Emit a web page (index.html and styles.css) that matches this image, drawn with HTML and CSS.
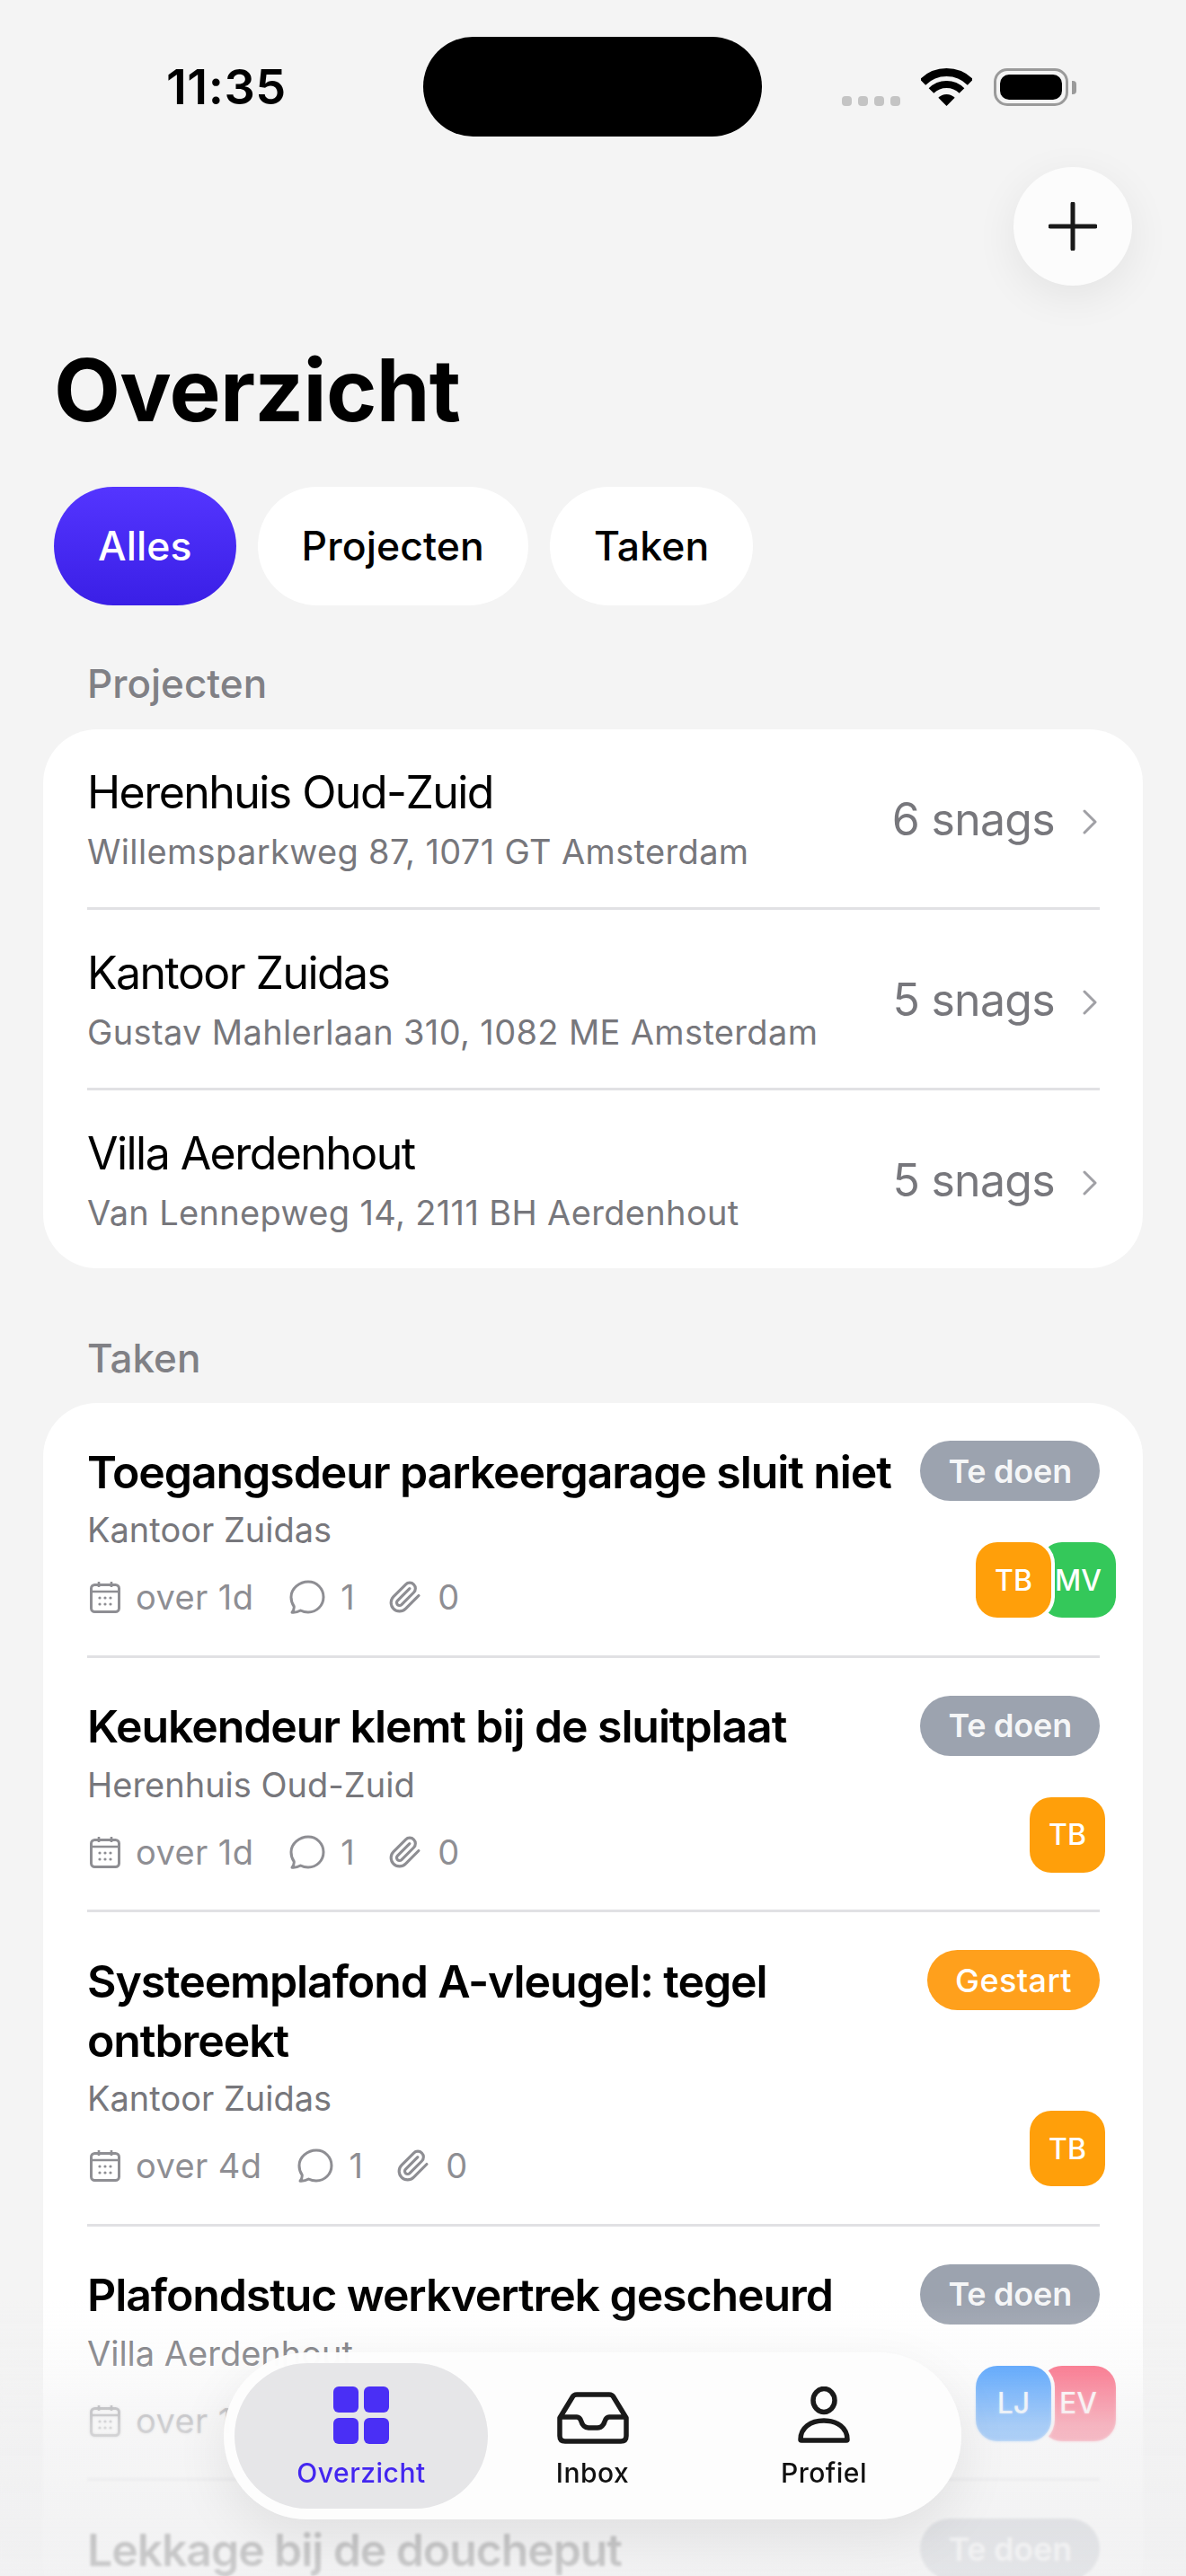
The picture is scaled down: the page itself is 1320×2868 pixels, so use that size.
FILE: index.html
```html
<!DOCTYPE html>
<html lang="en">
<head>
  <meta charset="UTF-8">
  <meta name="viewport" content="width=device-width, initial-scale=1.0">
  <title>Overzicht</title>
  <link rel="stylesheet" href="styles.css">
</head>
<body>
  <svg class="sprite" xmlns="http://www.w3.org/2000/svg">
    <symbol id="i-chevron" viewBox="0 0 16 28">
      <path d="M2 2l12 12L2 26" fill="none" stroke="currentColor" stroke-width="3" stroke-linecap="round" stroke-linejoin="round"/>
    </symbol>
    <symbol id="i-calendar" viewBox="0 0 34 36">
      <rect x="1.5" y="4.5" width="31" height="30" rx="4" fill="none" stroke="currentColor" stroke-width="3"/>
      <path d="M2 12h30M10 1v6M24 1v6" fill="none" stroke="currentColor" stroke-width="2.6"/>
      <g fill="currentColor">
        <circle cx="11" cy="19" r="1.6"/><circle cx="17" cy="19" r="1.6"/><circle cx="23" cy="19" r="1.6"/>
        <circle cx="11" cy="26" r="1.6"/><circle cx="17" cy="26" r="1.6"/><circle cx="23" cy="26" r="1.6"/>
      </g>
    </symbol>
    <symbol id="i-comment" viewBox="0 0 40 38">
      <path d="M21 2c9.500 0 17 7.500 17 17s-7.500 17-17 17c-3 0-6-.7-8.500-2-2.500 1.500-6 2.500-9.500 2.200 1.500-1.800 2.500-4.200 2.200-6.700C3 26.500 2 23 2 19 2 9.500 11.500 2 21 2z" fill="none" stroke="currentColor" stroke-width="3" stroke-linejoin="round"/>
    </symbol>
    <symbol id="i-clip" viewBox="0 0 24 24">
      <path d="M21.44 11.05l-9.190 9.190a6 6 0 0 1-8.490-8.490l8.570-8.570A4 4 0 1 1 18 8.840l-8.590 8.570a2 2 0 0 1-2.830-2.830l8.490-8.480" fill="none" stroke="currentColor" stroke-width="2" stroke-linecap="round" stroke-linejoin="round"/>
    </symbol>
  </svg>

  <div class="screen">
    <!-- Status bar -->
    <div class="status-bar">
      <span class="status-time">11:35</span>
      <div class="island"></div>
      <div class="status-icons">
        <div class="signal-dots"><span></span><span></span><span></span><span></span></div>
        <svg class="icon-wifi" viewBox="0 0 57 42">
          <path d="M2 15.500A37.500 37.500 0 0 1 55 15.500" fill="none" stroke="#000" stroke-width="9"/>
          <path d="M11.500 25A24 24 0 0 1 45.500 25" fill="none" stroke="#000" stroke-width="8"/>
          <path d="M28.500 42L19.300 32.800A13 13 0 0 1 37.700 32.800Z" fill="#000"/>
        </svg>
        <div class="battery"><div class="battery-fill"></div></div>
        <div class="battery-nub"></div>
      </div>
    </div>

    <div class="actions">
      <button class="add-button">
        <svg class="icon-plus" viewBox="0 0 54 54">
          <path d="M27 2v50M2 27h50" fill="none" stroke="#1a1a1a" stroke-width="5" stroke-linecap="round"/>
        </svg>
      </button>
    </div>

    <h1 class="page-title">Overzicht</h1>

    <div class="chips">
      <a class="chip chip-active">Alles</a>
      <a class="chip">Projecten</a>
      <a class="chip">Taken</a>
    </div>

    <!-- Projects -->
    <h2 class="section-label">Projecten</h2>
    <div class="card">
      <div class="project">
        <div class="project-text">
          <div class="project-name">Herenhuis Oud-Zuid</div>
          <div class="project-address">Willemsparkweg 87, 1071 GT Amsterdam</div>
        </div>
        <span class="project-count">6 snags</span>
        <svg class="icon-chevron"><use href="#i-chevron"/></svg>
      </div>
      <div class="project">
        <div class="project-text">
          <div class="project-name">Kantoor Zuidas</div>
          <div class="project-address">Gustav Mahlerlaan 310, 1082 ME Amsterdam</div>
        </div>
        <span class="project-count">5 snags</span>
        <svg class="icon-chevron"><use href="#i-chevron"/></svg>
      </div>
      <div class="project">
        <div class="project-text">
          <div class="project-name">Villa Aerdenhout</div>
          <div class="project-address">Van Lennepweg 14, 2111 BH Aerdenhout</div>
        </div>
        <span class="project-count">5 snags</span>
        <svg class="icon-chevron"><use href="#i-chevron"/></svg>
      </div>
    </div>

    <!-- Tasks -->
    <h2 class="section-label section-label-tasks">Taken</h2>
    <div class="card">
      <div class="task">
        <div class="task-text">
          <div class="task-title">Toegangsdeur parkeergarage sluit niet</div>
          <div class="task-project">Kantoor Zuidas</div>
          <div class="task-meta">
            <svg class="icon-calendar"><use href="#i-calendar"/></svg><span class="meta-value">over 1d</span>
            <svg class="icon-comment"><use href="#i-comment"/></svg><span class="meta-value">1</span>
            <svg class="icon-clip"><use href="#i-clip"/></svg><span class="meta-value">0</span>
          </div>
        </div>
        <div class="task-side">
          <span class="badge badge-todo">Te doen</span>
          <div class="avatars avatars-pair">
            <span class="avatar avatar-orange">TB</span>
            <span class="avatar avatar-green">MV</span>
          </div>
        </div>
      </div>

      <div class="task">
        <div class="task-text">
          <div class="task-title">Keukendeur klemt bij de sluitplaat</div>
          <div class="task-project">Herenhuis Oud-Zuid</div>
          <div class="task-meta">
            <svg class="icon-calendar"><use href="#i-calendar"/></svg><span class="meta-value">over 1d</span>
            <svg class="icon-comment"><use href="#i-comment"/></svg><span class="meta-value">1</span>
            <svg class="icon-clip"><use href="#i-clip"/></svg><span class="meta-value">0</span>
          </div>
        </div>
        <div class="task-side">
          <span class="badge badge-todo">Te doen</span>
          <div class="avatars">
            <span class="avatar avatar-orange">TB</span>
          </div>
        </div>
      </div>

      <div class="task">
        <div class="task-text">
          <div class="task-title">Systeemplafond A-vleugel: tegel ontbreekt</div>
          <div class="task-project">Kantoor Zuidas</div>
          <div class="task-meta">
            <svg class="icon-calendar"><use href="#i-calendar"/></svg><span class="meta-value">over 4d</span>
            <svg class="icon-comment"><use href="#i-comment"/></svg><span class="meta-value">1</span>
            <svg class="icon-clip"><use href="#i-clip"/></svg><span class="meta-value">0</span>
          </div>
        </div>
        <div class="task-side">
          <span class="badge badge-started">Gestart</span>
          <div class="avatars">
            <span class="avatar avatar-orange">TB</span>
          </div>
        </div>
      </div>

      <div class="task">
        <div class="task-text">
          <div class="task-title">Plafondstuc werkvertrek gescheurd</div>
          <div class="task-project">Villa Aerdenhout</div>
          <div class="task-meta">
            <svg class="icon-calendar"><use href="#i-calendar"/></svg><span class="meta-value">over 1d</span>
            <svg class="icon-comment"><use href="#i-comment"/></svg><span class="meta-value">1</span>
            <svg class="icon-clip"><use href="#i-clip"/></svg><span class="meta-value">0</span>
          </div>
        </div>
        <div class="task-side">
          <span class="badge badge-todo">Te doen</span>
          <div class="avatars avatars-pair">
            <span class="avatar avatar-blue">LJ</span>
            <span class="avatar avatar-pink">EV</span>
          </div>
        </div>
      </div>

      <div class="task">
        <div class="task-text">
          <div class="task-title">Lekkage bij de doucheput</div>
        </div>
        <div class="task-side">
          <span class="badge badge-todo">Te doen</span>
        </div>
      </div>
    </div>

    <!-- Bottom fade and floating tab bar -->
    <div class="bottom-blur"></div>
    <div class="bottom-fade"></div>
    <nav class="tab-bar">
      <a class="tab tab-active">
        <div class="icon-grid"><span></span><span></span><span></span><span></span></div>
        <span class="tab-label">Overzicht</span>
      </a>
      <a class="tab">
        <svg class="icon-inbox" viewBox="0 0 80 58">
          <path d="M3 29L17 6c1-2 3-3 5-3h36c2 0 4 1 5 3l14 23v20c0 4-2 6-6 6H9c-4 0-6-2-6-6z" fill="none" stroke="#1a1a1a" stroke-width="5.500" stroke-linejoin="round"/>
          <path d="M3 28h19c3 0 4 2 5 5 1 4 4 7 8 7h10c4 0 7-3 8-7 1-3 2-5 5-5h19" fill="none" stroke="#1a1a1a" stroke-width="5.500" stroke-linejoin="round"/>
        </svg>
        <span class="tab-label">Inbox</span>
      </a>
      <a class="tab">
        <svg class="icon-profile" viewBox="0 0 58 64">
          <ellipse cx="29" cy="15.500" rx="12" ry="13" fill="none" stroke="#1a1a1a" stroke-width="5.500"/>
          <path d="M3 59c0-13 11-21 26-21s26 8 26 21c0 .6-.4 1-1 1H4c-.6 0-1-.4-1-1z" fill="none" stroke="#1a1a1a" stroke-width="5.500" stroke-linejoin="round"/>
        </svg>
        <span class="tab-label">Profiel</span>
      </a>
    </nav>
  </div>
</body>
</html>
```

FILE: styles.css
```css
:root {
  --background: #f4f4f4;
  --card: #ffffff;
  --border: #e1e1e4;
  --foreground: #000000;
  --muted: #77777c;
  --meta: #8e8e93;
  --primary: #4326f0;
  --orange: #ff9f0a;
}

* {
  box-sizing: border-box;
}

body {
  margin: 0;
  background-color: var(--background);
  color: var(--foreground);
  font-family: Inter, "Noto Sans", sans-serif;
}

.sprite {
  display: none;
}

.screen {
  position: relative;
  width: 1320px;
  height: 2868px;
  overflow: hidden;
}

/* Status bar */
.status-bar {
  display: flex;
  align-items: center;
  height: 111px;
  margin-top: 41px;
  padding-left: 185px;
}

.status-time {
  width: 286px;
  font-size: 54px;
  font-weight: 600;
  letter-spacing: 0.500px;
}

.island {
  width: 377px;
  height: 111px;
  border-radius: 56px;
  background-color: #000;
}

.status-icons {
  display: flex;
  align-items: flex-end;
  height: 42px;
  margin-left: 89px;
}

.signal-dots {
  display: flex;
  gap: 7px;
  margin-right: 23px;
}

.signal-dots span {
  width: 11px;
  height: 11px;
  border-radius: 4px;
  background-color: #c4c4c4;
}

.icon-wifi {
  width: 57px;
  height: 42px;
  margin-right: 24px;
}

.battery {
  width: 83px;
  height: 42px;
  padding: 4px;
  border: 3px solid #9a9a9a;
  border-radius: 15px;
}

.battery-fill {
  height: 100%;
  border-radius: 10px;
  background-color: #000;
}

.battery-nub {
  width: 5px;
  height: 15px;
  margin-left: 4px;
  margin-bottom: 13px;
  border-radius: 0 4px 4px 0;
  background-color: #9a9a9a;
}

/* Header */
.actions {
  display: flex;
  justify-content: flex-end;
  margin-top: 34px;
  padding-right: 60px;
}

.add-button {
  display: flex;
  align-items: center;
  justify-content: center;
  width: 132px;
  height: 132px;
  padding: 0;
  border: none;
  border-radius: 50%;
  background-color: #fcfcfc;
  box-shadow: 0 12px 48px rgba(0, 0, 0, 0.07);
}

.icon-plus {
  width: 54px;
  height: 54px;
}

.page-title {
  margin: 58px 0 0 60px;
  font-size: 96px;
  line-height: 116px;
  font-weight: 700;
  letter-spacing: -0.700px;
}

.chips {
  display: flex;
  gap: 24px;
  margin: 50px 0 0 60px;
}

.chip {
  display: flex;
  align-items: center;
  height: 132px;
  padding: 0 49px;
  border-radius: 66px;
  background-color: var(--card);
  font-size: 44.500px;
  font-weight: 500;
  letter-spacing: 0.100px;
}

.chip-active {
  background: linear-gradient(180deg, #5435ff, #3a1fe6);
  color: #fff;
}

.section-label {
  margin: 62px 0 26px 97px;
  color: #808085;
  font-size: 44px;
  line-height: 50px;
  font-weight: 500;
}

.section-label-tasks {
  margin-top: 75px;
  margin-bottom: 25px;
}

.card {
  margin: 0 48px;
  padding: 0 48px 0 49px;
  border-radius: 60px;
  background-color: var(--card);
}

/* Project rows */
.project {
  display: flex;
  align-items: center;
  height: 201px;
  padding-top: 1px;
  border-bottom: 3px solid var(--border);
}

.project:last-child {
  height: 198px;
  padding-top: 2px;
  border-bottom: none;
}

.project-text {
  flex: 1;
}

.project-name {
  font-size: 50px;
  line-height: 62px;
  letter-spacing: -1.550px;
}

.project-address {
  margin-top: 10px;
  color: var(--muted);
  font-size: 38px;
  line-height: 50px;
  letter-spacing: 0.350px;
}

.project-count {
  color: var(--muted);
  font-size: 50px;
  letter-spacing: -0.700px;
}

.icon-chevron {
  width: 16px;
  height: 28px;
  margin-top: 6px;
  margin-left: 31px;
  margin-right: 3px;
  color: #a0a0a5;
}

/* Task rows */
.task {
  display: flex;
  justify-content: space-between;
  padding: 42px 0 39.500px;
  border-bottom: 3px solid var(--border);
}

.task:last-child {
  border-bottom: none;
}

.task-text {
  flex: 1;
}

.task-title {
  max-width: 905px;
  margin-top: 1.500px;
  font-size: 50px;
  line-height: 66px;
  font-weight: 600;
  letter-spacing: -1.100px;
}

.task-project {
  margin-top: 6.500px;
  color: var(--muted);
  font-size: 38px;
  line-height: 50px;
}

.task-meta {
  display: flex;
  align-items: center;
  height: 50px;
  margin-top: 25px;
  color: var(--meta);
  font-size: 38px;
}

.meta-value {
  margin-left: 17px;
  margin-right: 40px;
  letter-spacing: 0.400px;
}

.icon-calendar {
  width: 34px;
  height: 36px;
  margin-left: 3px;
  color: var(--meta);
}

.icon-comment {
  width: 40px;
  height: 38px;
  color: var(--meta);
}

.icon-clip {
  width: 38px;
  height: 38px;
  margin-left: -3px;
  color: var(--meta);
}

.task-side {
  display: flex;
  flex-direction: column;
  align-items: flex-end;
  justify-content: space-between;
  margin-bottom: 2px;
}

.badge {
  display: flex;
  align-items: center;
  height: 67px;
  padding: 0 31px;
  border-radius: 34px;
  color: rgba(255, 255, 255, 0.92);
  font-size: 36px;
  font-weight: 600;
  letter-spacing: -0.200px;
}

.badge-todo {
  background-color: #9ca3af;
}

.badge-started {
  background-color: #ffa01c;
  color: #fff;
  font-weight: 500;
  letter-spacing: 0.400px;
}

.avatars {
  display: flex;
  margin-right: -6px;
}

.avatars-pair {
  margin-right: -18px;
}

.avatar {
  display: flex;
  align-items: center;
  justify-content: center;
  width: 84px;
  height: 84px;
  border-radius: 24px;
  color: #fff;
  font-size: 32px;
  font-weight: 500;
}

.avatars-pair .avatar:first-child {
  position: relative;
  z-index: 1;
  box-shadow: 0 0 0 4px #fff;
}

.avatars-pair .avatar + .avatar {
  margin-left: -12px;
}

.avatar-orange {
  background-color: var(--orange);
}

.avatar-green {
  background-color: #34c85a;
}

.avatar-blue {
  background-color: #3b96ff;
}

.avatar-pink {
  background-color: #fc5c78;
}

/* Bottom fade + tab bar */
.bottom-blur {
  position: absolute;
  z-index: 2;
  left: 0;
  right: 0;
  top: 2640px;
  bottom: 0;
  backdrop-filter: blur(1.500px);
  -webkit-mask-image: linear-gradient(180deg, transparent, #000 120px);
  mask-image: linear-gradient(180deg, transparent, #000 120px);
}

.bottom-fade {
  position: absolute;
  z-index: 2;
  left: 0;
  right: 0;
  top: 2560px;
  bottom: 0;
  background: linear-gradient(180deg, rgba(240, 240, 241, 0) 0, rgba(240, 240, 241, 0.22) 70px, rgba(240, 240, 241, 0.6) 140px, rgba(240, 240, 241, 0.8) 240px, rgba(240, 240, 241, 0.85) 308px);
}

.tab-bar {
  position: absolute;
  z-index: 3;
  left: 249px;
  top: 2619px;
  display: grid;
  grid-template-columns: 282px 233px 282px;
  width: 821px;
  height: 186px;
  padding: 12px;
  border-radius: 93px;
  background-color: rgba(253, 253, 253, 0.95);
  box-shadow: 0 20px 60px rgba(0, 0, 0, 0.08);
  backdrop-filter: blur(20px);
}

.tab {
  display: flex;
  flex-direction: column;
  align-items: center;
  justify-content: flex-end;
  padding-bottom: 22px;
  border-radius: 81px;
  color: #111;
}

.tab-active {
  background-color: #e6e6e8;
  color: var(--primary);
}

.tab-label {
  margin-top: 14px;
  font-size: 30px;
  line-height: 36px;
  font-weight: 500;
  letter-spacing: 0.500px;
}

.icon-grid {
  display: grid;
  grid-template-columns: 28px 28px;
  grid-template-rows: 29px 29px;
  gap: 6px;
}

.icon-grid span {
  border-radius: 6px;
  background-color: #4a2ff5;
}

.icon-inbox {
  width: 80px;
  height: 58px;
}

.icon-profile {
  width: 58px;
  height: 64px;
}
```
